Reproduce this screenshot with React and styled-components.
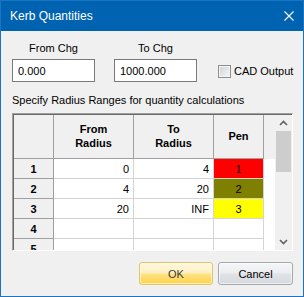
import React from 'react';
import styled, { createGlobalStyle } from 'styled-components';

const Global = createGlobalStyle`
  html, body { margin: 0; padding: 0; background: #f0f0f0; }
  body { font-family: "Liberation Sans", Arial, sans-serif; }
  * { box-sizing: border-box; }
`;

const Window = styled.div`
  width: 304px;
  height: 297px;
  border: 1px solid #1a74c4;
  background: #f0f0f0;
  display: flex;
  flex-direction: column;
  overflow: hidden;
`;

const TitleBar = styled.div`
  height: 30px;
  flex: none;
  background: #0063b1;
  color: #fff;
  display: flex;
  align-items: center;
  justify-content: space-between;
  padding: 0 9px;
  font-family: "Liberation Sans", Arial, sans-serif;
  font-size: 12px;
`;

const Content = styled.div`
  padding: 11px 10px 0 11px;
  display: flex;
  flex-direction: column;
  font-size: 11px;
  color: #000;
`;

const TopRow = styled.div`
  display: flex;
  align-items: flex-end;
`;

const Field = styled.div`
  width: 83px;
  display: flex;
  flex-direction: column;
  align-items: center;
  gap: 4px;
  margin-left: ${(p) => p.$ml || 0}px;
`;

const Label = styled.div`
  line-height: 13px;
  white-space: nowrap;
`;

const TextBox = styled.input`
  width: 83px;
  height: 23px;
  border: 1px solid #7a7a7a;
  background: #fff;
  padding: 0 5px;
  font-family: "Liberation Sans", Arial, sans-serif;
  font-size: 11px;
  color: #000;
  outline: none;
  margin: 0;
`;

const CheckRow = styled.label`
  height: 23px;
  display: flex;
  align-items: center;
  margin-left: 21px;
  gap: 3px;
  white-space: nowrap;
`;

const CheckBox = styled.span`
  width: 13px;
  height: 13px;
  border: 1px solid #8e8f8f;
  box-shadow: inset 0 0 0 1px #f4f4f4;
  background: linear-gradient(135deg, #cfd2d6, #f7f7f7);
  margin-top: 1px;
`;

const SectionLabel = styled.div`
  margin-top: 12px;
  line-height: 13px;
  white-space: nowrap;
`;

const GridFrame = styled.div`
  margin-top: 6px;
  width: 281px;
  height: 138px;
  border-top: 1px solid #a0a0a0;
  border-left: 1px solid #a0a0a0;
  border-right: 1px solid #ffffff;
  border-bottom: 1px solid #ffffff;
`;

const GridInner = styled.div`
  width: 100%;
  height: 100%;
  border-top: 1px solid #696969;
  border-left: 1px solid #696969;
  display: flex;
  overflow: hidden;
`;

const TableArea = styled.div`
  width: 261px;
  height: 135px;
  overflow: hidden;
  background: #fff;
`;

const Row = styled.div`
  display: grid;
  grid-template-columns: 40px 80px 80px 50px 11px;
  height: ${(p) => p.$h}px;
`;

const HeadCell = styled.div`
  background: #f0f0f0;
  border-right: 1px solid #a0a0a0;
  border-bottom: 1px solid #a0a0a0;
  display: flex;
  align-items: center;
  justify-content: center;
  text-align: center;
  font-weight: bold;
  line-height: 13.5px;
`;

const RowHead = styled.div`
  background: #f0f0f0;
  border-right: 1px solid #a0a0a0;
  border-bottom: 1px solid #a0a0a0;
  display: flex;
  align-items: center;
  justify-content: center;
  font-weight: bold;
`;

const Cell = styled.div`
  background: ${(p) => p.$bg || '#fff'};
  border-right: 1px solid #d4d4d4;
  border-bottom: 1px solid #d4d4d4;
  display: flex;
  align-items: center;
  justify-content: ${(p) => (p.$center ? 'center' : 'flex-end')};
  padding-right: ${(p) => (p.$center ? 0 : 4)}px;
`;

const Filler = styled.div`
  background: ${(p) => (p.$head ? '#f0f0f0' : '#fff')};
`;

const ScrollBar = styled.div`
  width: 17px;
  height: 135px;
  background: #f0f0f0;
  display: flex;
  flex-direction: column;
`;

const ArrowBtn = styled.div`
  height: 16px;
  display: flex;
  align-items: center;
  justify-content: center;
`;

const Thumb = styled.div`
  height: 41px;
  margin: 0 1px;
  background: #cdcdcd;
`;

const Track = styled.div`
  flex: 1;
`;

const ButtonRow = styled.div`
  margin-top: 11px;
  display: flex;
  justify-content: flex-end;
  gap: 5px;
`;

const Button = styled.button`
  width: ${(p) => p.$w}px;
  height: 23px;
  margin: 0;
  padding: 0;
  border-radius: 3px;
  font-family: "Liberation Sans", Arial, sans-serif;
  font-size: 11px;
  color: ${(p) => (p.$primary ? '#3a3a3a' : '#000')};
  border: 1px solid ${(p) => (p.$primary ? '#e3c36a' : '#a3a8ae')};
  background: ${(p) =>
    p.$primary
      ? 'linear-gradient(#fff8e0 0%, #fff0c4 45%, #ffe07e 55%, #ffd24a 100%)'
      : 'linear-gradient(#f5f6f8 0%, #eceef1 45%, #dfe2e6 55%, #d6d9de 100%)'};
  box-shadow: inset 0 0 0 1px ${(p) => (p.$primary ? 'rgba(255,250,230,0.7)' : 'rgba(255,255,255,0.6)')};
`;

const Chevron = ({ up }) => (
  <svg width="9" height="6" viewBox="0 0 9 6">
    <polyline
      points={up ? '1,5 4.5,1.5 8,5' : '1,1 4.5,4.5 8,1'}
      fill="none"
      stroke="#606060"
      strokeWidth="1.6"
    />
  </svg>
);

const rows = [
  { n: 1, from: '0', to: '4', pen: '1', bg: '#ff0000' },
  { n: 2, from: '4', to: '20', pen: '2', bg: '#808000' },
  { n: 3, from: '20', to: 'INF', pen: '3', bg: '#ffff00' },
  { n: 4, from: '', to: '', pen: '' },
  { n: 5, from: '', to: '', pen: '' },
];

export default function App() {
  return (
    <>
      <Global />
      <Window>
        <TitleBar>
          <span>Kerb Quantities</span>
          <svg width="10" height="10" viewBox="0 0 10 10">
            <path d="M0.5 0.5 L9.5 9.5 M9.5 0.5 L0.5 9.5" stroke="#fff" strokeWidth="1.1" />
          </svg>
        </TitleBar>
        <Content>
          <TopRow>
            <Field>
              <Label>From Chg</Label>
              <TextBox readOnly value="0.000" />
            </Field>
            <Field $ml={19}>
              <Label>To Chg</Label>
              <TextBox readOnly value="1000.000" />
            </Field>
            <CheckRow>
              <CheckBox />
              <span>CAD Output</span>
            </CheckRow>
          </TopRow>
          <SectionLabel>Specify Radius Ranges for quantity calculations</SectionLabel>
          <GridFrame>
            <GridInner>
              <TableArea>
                <Row $h={44}>
                  <HeadCell />
                  <HeadCell>From<br />Radius</HeadCell>
                  <HeadCell>To<br />Radius</HeadCell>
                  <HeadCell>Pen</HeadCell>
                  <Filler $head />
                </Row>
                {rows.map((r) => (
                  <Row $h={20} key={r.n}>
                    <RowHead>{r.n}</RowHead>
                    <Cell>{r.from}</Cell>
                    <Cell>{r.to}</Cell>
                    <Cell $center $bg={r.bg}>{r.pen}</Cell>
                    <Filler />
                  </Row>
                ))}
              </TableArea>
              <ScrollBar>
                <ArrowBtn><Chevron up /></ArrowBtn>
                <Thumb />
                <Track />
                <ArrowBtn><Chevron /></ArrowBtn>
              </ScrollBar>
            </GridInner>
          </GridFrame>
          <ButtonRow>
            <Button $primary $w={74}>OK</Button>
            <Button $w={75}>Cancel</Button>
          </ButtonRow>
        </Content>
      </Window>
    </>
  );
}
